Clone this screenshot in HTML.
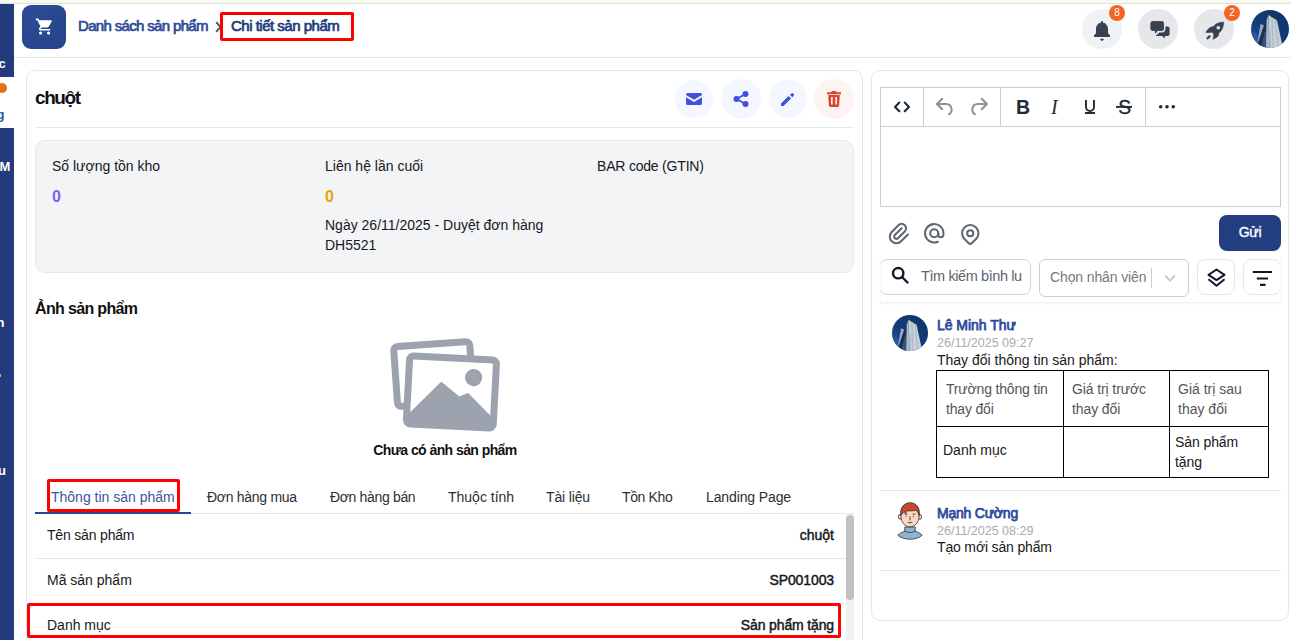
<!DOCTYPE html>
<html><head><meta charset="utf-8">
<style>
*{box-sizing:border-box;margin:0;padding:0}
html,body{width:1291px;height:640px;overflow:hidden;background:#fff;font-family:"Liberation Sans",sans-serif;color:#16181b}
.a{position:absolute}
svg{display:block}
.sb{position:absolute;left:0;width:14px;background:#233a7d;overflow:hidden}
.sbt{position:absolute;color:#fff;font-size:13px;line-height:13px;font-weight:bold}
.bc{font-size:15px;font-weight:bold;line-height:18px;white-space:nowrap}
.redbox{position:absolute;border:3px solid #ff0000;border-radius:2px}
.hic{position:absolute;width:40px;height:40px;border-radius:50%;background:#e5e7eb}
.badge{position:absolute;width:16px;height:16px;border-radius:50%;background:#f26522;color:#fff;font-size:10px;line-height:16px;text-align:center}
.card{position:absolute;border:1px solid #e5e7eb;border-radius:9px;background:#fff}
.act{position:absolute;width:38px;height:38px;border-radius:50%;background:#f4f7ff}
.t14{position:absolute;font-size:14px;line-height:17px;white-space:nowrap}
.tab{position:absolute;font-size:14px;line-height:17px;white-space:nowrap;color:#2b2f33;top:489px}
.hl{position:absolute;height:1px;background:#e5e7eb}
</style></head>
<body>
<div class="a" style="left:0;top:0;width:1291px;height:3px;background:#f6f9f0"></div>
<div class="a" style="left:0;top:3px;width:1291px;height:1px;background:#e1e5d7"></div>

<!-- sidebar -->
<div class="sb" style="top:4px;height:73px"><div class="sbt" style="left:-1.5px;top:53px">c</div></div>
<div class="a" style="left:-3px;top:83px;width:10px;height:10px;border-radius:50%;background:#e5700f"></div>
<div class="a" style="left:-3.5px;top:106.5px;font-size:13px;line-height:15px;color:#2456a0;font-weight:bold">g</div>
<div class="sb" style="top:128px;height:512px">
  <div class="sbt" style="left:-0.5px;top:32px">M</div>
  <div class="sbt" style="left:-3.5px;top:188px">n</div>
  <div class="a" style="left:-1px;top:246px;width:2px;height:3px;background:#e5a040"></div>
  <div class="sbt" style="left:-2px;top:336px">u</div>
</div>

<!-- header -->
<div class="hl" style="left:14px;top:57px;width:1277px"></div>
<div class="a" style="left:22px;top:5px;width:44px;height:44px;border-radius:9px;background:linear-gradient(135deg,#2c4d96,#26428a)">
  <svg class="a" style="left:13px;top:11.5px" width="19.2" height="19.2" viewBox="0 0 24 24"><path fill="#fff" d="M7 18c-1.1 0-1.99.9-1.99 2S5.9 22 7 22s2-.9 2-2-.9-2-2-2zM1 2v2h2l3.6 7.59-1.35 2.45c-.16.28-.25.61-.25.96 0 1.1.9 2 2 2h12v-2H7.42c-.14 0-.25-.11-.25-.25l.03-.12.9-1.63h7.45c.75 0 1.41-.41 1.75-1.03l3.58-6.49A1.003 1.003 0 0 0 20 4H5.21l-.94-2H1zm16 16c-1.1 0-1.99.9-1.99 2s.89 2 1.99 2 2-.9 2-2-.9-2-2-2z"/></svg>
</div>
<div class="a bc" style="left:78px;top:17px;color:#2c4b9a;letter-spacing:-0.66px;font-weight:normal;-webkit-text-stroke-width:.7px">Danh sách sản phẩm</div>
<svg class="a" style="left:215px;top:20.5px" width="8" height="12" viewBox="0 0 8 12"><path d="M1.2 1.2l4.3 4.8-4.3 4.8" fill="none" stroke="#4b5563" stroke-width="1.9"/></svg>
<div class="a bc" style="left:231px;top:17px;color:#213c80;letter-spacing:-0.5px;font-weight:normal;-webkit-text-stroke-width:.7px">Chi tiết sản phẩm</div>
<div class="redbox" style="left:220px;top:12px;width:134px;height:29px"></div>

<div class="hic" style="left:1082px;top:9px;background:#f0f2f5"></div>
<div class="hic" style="left:1138px;top:9px"></div>
<div class="hic" style="left:1194px;top:9px"></div>
<svg class="a" style="left:1080px;top:10px" width="150" height="40" viewBox="1080 10 150 40">
  <g fill="#374151">
    <rect x="1101.1" y="21" width="1.9" height="2.8" rx=".5"/>
    <path d="M1102 22.6c-3.5 0-6 2.9-6 6.4v4.3l-2 1.9v1.7h16v-1.7l-2-1.9v-4.3c0-3.5-2.5-6.4-6-6.4z"/>
    <path d="M1099.9 38.8h4.2l-1.3 2h-1.6z"/>
  </g>
  <path d="M1160.5 26.5h7.1a2 2 0 0 1 2 2v5.4a2 2 0 0 1-2 2h-2.7l-.1 2.7-2.7-2.7h-4.6l-2.2 .1 3.2-2.5z" fill="#374151"/>
  <path d="M1152.6 21.3h9.2a2 2 0 0 1 2 2v5.5a2 2 0 0 1-2 2h-4.2l-2.4 3-.2-3h-2.4a2 2 0 0 1-2-2v-5.5a2 2 0 0 1 2-2z" fill="#374151" stroke="#e5e7eb" stroke-width="3.2" paint-order="stroke"/>
  <path d="M1152.6 21.3h9.2a2 2 0 0 1 2 2v5.5a2 2 0 0 1-2 2h-4.2l-2.4 3-.2-3h-2.4a2 2 0 0 1-2-2v-5.5a2 2 0 0 1 2-2z" fill="#374151"/>
  <path d="M1223.7 22.2C1221 22 1218 22.7 1215.6 24.3L1213.4 26.5 1210.6 27.3C1208.9 28 1206.9 30.4 1205.9 32.4L1210.9 32.5 1211.7 32 1213.9 34.2 1213 39.2C1215 38.4 1217.6 36.8 1218.4 35.7L1218.7 33.3 1220.8 31.2C1222.4 29.4 1223.5 25.8 1223.7 22.2z" fill="#374151" stroke="#374151" stroke-width=".6" stroke-linejoin="round"/>
  <circle cx="1218.3" cy="27.7" r="1.8" fill="#e5e7eb"/>
  <path d="M1206.9 38.9l3.3-3.1" stroke="#374151" stroke-width="2.2"/>
</svg>
<svg class="a" style="left:1250px;top:9px" width="40" height="40" viewBox="0 0 40 40"><defs><clipPath id="c1"><circle cx="20" cy="20" r="19"/></clipPath><linearGradient id="skyc1" x1="1" y1="0" x2="0" y2="1"><stop offset="0" stop-color="#0c3468"/><stop offset=".6" stop-color="#143d78"/><stop offset="1" stop-color="#2a5ea0"/></linearGradient></defs><g clip-path="url(#c1)">
      <rect width="40" height="40" fill="url(#skyc1)"/>
      <path d="M2 40L4 22 9 28 7 40z" fill="#2f64a6" opacity=".6"/>
      <path d="M7.5 33L10.5 15 14.5 16.5 12 36z" fill="#8ea9c6"/>
      <path d="M7 37L14 16 16.8 11 16.5 40 9 40z" fill="#1b3050"/>
      <path d="M11 38L14.5 24 16.5 22 16 40z" fill="#3d5e86" opacity=".8"/>
      <path d="M16.5 11L18.5 6 19.3 40 16 40z" fill="#a9b9c8"/>
      <path d="M18.5 6L27 11.5 32.5 37 19.5 40z" fill="#c6cfd8"/>
      <path d="M22 9l1 30M25.5 11l2.5 27M20 20l.3 18" stroke="#9fb1c3" stroke-width=".8" fill="none"/>
      <path d="M19 7.5l8 4.5" stroke="#d9b98a" stroke-width="1" opacity=".8"/>
    </g></svg>
<div class="badge" style="left:1109px;top:5px">8</div>
<div class="badge" style="left:1224px;top:5px">2</div>



<!-- left card -->
<div class="card" style="left:26px;top:70px;width:837px;height:600px"></div>
<div class="a" style="left:35px;top:87px;font-size:19px;font-weight:bold;line-height:22px;letter-spacing:-1.4px;color:#111">chuột</div>
<div class="act" style="left:675px;top:80px">
  <svg class="a" style="left:11px;top:13px" width="16" height="12" viewBox="0 0 16 12"><path fill="#4150e0" d="M1.5 0h13A1.5 1.5 0 0 1 16 1.5v.6L8 6.8 0 2.1v-.6A1.5 1.5 0 0 1 1.5 0zM0 4.2l8 4.7 8-4.7v6.3A1.5 1.5 0 0 1 14.5 12h-13A1.5 1.5 0 0 1 0 10.5z"/></svg>
</div>
<div class="act" style="left:721px;top:79px;width:40px;height:40px">
  <svg class="a" style="left:12px;top:12px" width="16" height="16" viewBox="0 0 16 16"><g fill="#4150e0"><circle cx="3.5" cy="8" r="3"/><circle cx="12.5" cy="3" r="3"/><circle cx="12.5" cy="13" r="3"/></g><path d="M3.5 8L12.5 3M3.5 8l9 5" stroke="#4150e0" stroke-width="2"/></svg>
</div>
<div class="act" style="left:769px;top:80px">
  <svg class="a" style="left:11px;top:12.7px" width="14" height="14" viewBox="0 0 14 14"><path fill="#4150e0" d="M11.4.5a1.2 1.2 0 0 1 1.7 0l.6.6a1.2 1.2 0 0 1 0 1.7l-1.4 1.4-2.3-2.3zM8.6 2.9l2.5 2.5-7.6 7.6H1v-2.5z"/></svg>
</div>
<div class="act" style="left:814px;top:79px;width:40px;height:40px;background:#fdf4f1">
  <svg class="a" style="left:13px;top:12px" width="14" height="16" viewBox="0 0 14 16"><path fill="#dc4431" d="M5 0h4l.6 1.2H14v2H0v-2h4.4zM1.2 4h11.6l-.7 10.5A1.6 1.6 0 0 1 10.5 16h-7a1.6 1.6 0 0 1-1.6-1.5zm2.8 2v7.5h1.7V6zm4.3 0v7.5H10V6z"/></svg>
</div>
<div class="hl" style="left:35px;top:127px;width:819px"></div>

<div class="a" style="left:35px;top:140px;width:819px;height:133px;background:#f3f4f6;border:1px solid #e5e7eb;border-radius:10px"></div>
<div class="t14" style="left:52px;top:157.5px">Số lượng tồn kho</div>
<div class="a" style="left:52px;top:186.5px;font-size:16px;line-height:19px;font-weight:bold;color:#7c5cf6">0</div>
<div class="t14" style="left:325px;top:157.5px">Liên hệ lần cuối</div>
<div class="a" style="left:325px;top:186.5px;font-size:16px;line-height:19px;font-weight:bold;color:#e8a10a">0</div>
<div class="t14" style="left:325px;top:217px">Ngày 26/11/2025 - Duyệt đơn hàng</div>
<div class="t14" style="left:325px;top:236.5px">DH5521</div>
<div class="t14" style="left:597px;top:157.5px;letter-spacing:-0.2px">BAR code (GTIN)</div>

<div class="a" style="left:35px;top:299px;font-size:16px;font-weight:bold;line-height:19px;letter-spacing:-0.65px;color:#111">Ảnh sản phẩm</div>
<svg class="a" style="left:380px;top:328px" width="130" height="110" viewBox="380 328 130 110">
  <g transform="rotate(-4 433.6 373.9)"><rect x="395.5" y="344" width="76.2" height="60" rx="4" fill="none" stroke="#9ca3af" stroke-width="7"/></g>
  <g transform="rotate(3 451.4 392)">
    <rect x="407.9" y="358" width="87" height="68" rx="4" fill="#fff" stroke="#9ca3af" stroke-width="7"/>
    <circle cx="472.8" cy="376.4" r="8.6" fill="#9ca3af"/>
    <path d="M410 416.5L440.8 382.9 459.7 396.6 468.1 392.7 494 416.5 494 428 410 428z" fill="#9ca3af" stroke="#9ca3af" stroke-width="1" stroke-linejoin="round"/>
  </g>
</svg>
<div class="a" style="left:345px;top:441.5px;width:200px;text-align:center;font-size:14px;font-weight:bold;line-height:17px;letter-spacing:-0.57px;color:#111">Chưa có ảnh sản phẩm</div>

<!-- tabs -->
<div class="hl" style="left:35px;top:513px;width:819px"></div>
<div class="a" style="left:35px;top:512px;width:156px;height:2px;background:#2a4890"></div>
<div class="tab" style="left:51px;color:#3b55a0">Thông tin sản phẩm</div>
<div class="tab" style="left:207px;letter-spacing:-0.28px">Đơn hàng mua</div>
<div class="tab" style="left:330px;letter-spacing:-0.34px">Đơn hàng bán</div>
<div class="tab" style="left:448px">Thuộc tính</div>
<div class="tab" style="left:546px;letter-spacing:-0.14px">Tài liệu</div>
<div class="tab" style="left:622px;letter-spacing:-0.36px">Tồn Kho</div>
<div class="tab" style="left:706px;letter-spacing:-0.12px">Landing Page</div>
<div class="redbox" style="left:47px;top:479px;width:133px;height:33px"></div>

<div class="t14" style="left:47px;top:526.6px;letter-spacing:-0.18px">Tên sản phẩm</div>
<div class="t14" style="right:457px;top:526.6px;-webkit-text-stroke-width:.45px">chuột</div>
<div class="hl" style="left:35px;top:558px;width:811px"></div>
<div class="t14" style="left:47px;top:571.6px">Mã sản phẩm</div>
<div class="t14" style="right:457px;top:571.6px;-webkit-text-stroke-width:.45px;letter-spacing:-0.1px">SP001003</div>
<div class="hl" style="left:35px;top:603px;width:811px"></div>
<div class="t14" style="left:47px;top:616.6px">Danh mục</div>
<div class="t14" style="right:457px;top:616.6px;-webkit-text-stroke-width:.45px;letter-spacing:-0.14px">Sản phẩm tặng</div>
<div class="redbox" style="left:27px;top:603px;width:814px;height:35px"></div>
<div class="a" style="left:846px;top:514px;width:8px;height:126px;background:#f1f1f1"></div>
<div class="a" style="left:846px;top:515px;width:8px;height:85px;border-radius:4px;background:#c1c1c1"></div>

<!-- right card -->
<div class="card" style="left:871px;top:70px;width:418px;height:551px"></div>
<div class="a" style="left:880px;top:87px;width:401px;height:120px;border:1px solid #ccc"></div>
<div class="a" style="left:880px;top:126px;width:401px;height:1px;background:#ccc"></div>
<div class="a" style="left:923px;top:87px;width:1px;height:39px;background:#ccc"></div>
<div class="a" style="left:1000px;top:87px;width:1px;height:39px;background:#ccc"></div>
<div class="a" style="left:1145px;top:87px;width:1px;height:39px;background:#ccc"></div>
<svg class="a" style="left:880px;top:87px" width="300" height="40" viewBox="880 87 300 40">
  <path d="M899.3 102.6l-4.3 4.3 4.3 4.3M904.7 102.6l4.3 4.3-4.3 4.3" fill="none" stroke="#1f2937" stroke-width="2.1" stroke-linecap="round" stroke-linejoin="round"/>
  <path d="M942.2 98.8L936.9 104 942.2 109.3M937.5 104H946.3A5.6 5.6 0 0 1 949 114.3" fill="none" stroke="#8a9199" stroke-width="2" stroke-linecap="round" stroke-linejoin="round"/>
  <path d="M981.7 98.8L987 104 981.7 109.3M986.4 104H977.6A5.6 5.6 0 0 0 974.9 114.3" fill="none" stroke="#8a9199" stroke-width="2" stroke-linecap="round" stroke-linejoin="round"/>
  <text x="1016" y="114" font-family="Liberation Sans" font-weight="bold" font-size="19.5" fill="#1f2937">B</text>
  <text x="1051" y="114" font-family="Liberation Serif" font-style="italic" font-size="20" fill="#1f2937">I</text>
  <path d="M1086 100v7a4 4 0 0 0 8 0v-7M1085 113h10" fill="none" stroke="#1f2937" stroke-width="1.9"/>
  <text x="1118.3" y="114" font-family="Liberation Sans" font-size="19.3" fill="#1f2937" stroke="#1f2937" stroke-width=".35">S</text><path d="M1116 106.9h16" stroke="#1f2937" stroke-width="1.9"/>
  <circle cx="1160.7" cy="106.7" r="1.8" fill="#1f2937"/><circle cx="1167" cy="106.7" r="1.8" fill="#1f2937"/><circle cx="1173.3" cy="106.7" r="1.8" fill="#1f2937"/>
</svg>
<svg class="a" style="left:885.5px;top:221px" width="25" height="25" viewBox="0 0 24 24" fill="none" stroke="#5f6773" stroke-width="2" stroke-linecap="round" stroke-linejoin="round"><path d="M15 7l-6.5 6.5a1.5 1.5 0 0 0 3 3l6.5 -6.5a3 3 0 0 0 -6 -6l-6.5 6.5a4.5 4.5 0 0 0 9 9l6.5 -6.5"/></svg>
<svg class="a" style="left:921.8px;top:220.7px" width="24.5" height="24.5" viewBox="0 0 24 24" fill="none" stroke="#5f6773" stroke-width="2" stroke-linecap="round" stroke-linejoin="round"><path d="M12 12m-4 0a4 4 0 1 0 8 0a4 4 0 1 0 -8 0"/><path d="M16 12v1.5a2.5 2.5 0 0 0 5 0v-1.5a9 9 0 1 0 -5.5 8.28"/></svg>
<svg class="a" style="left:957.7px;top:222.4px" width="24.5" height="24.5" viewBox="0 0 24 24" fill="none" stroke="#5f6773" stroke-width="2" stroke-linecap="round" stroke-linejoin="round"><path d="M9 11a3 3 0 1 0 6 0a3 3 0 0 0 -6 0"/><path d="M17.657 16.657l-4.243 4.243a2 2 0 0 1 -2.827 0l-4.244 -4.243a8 8 0 1 1 11.314 0z"/></svg>
<div class="a" style="left:1219px;top:215px;width:62px;height:36px;border-radius:8px;background:#233e80;color:#fff;font-size:14px;text-align:center;line-height:34px;letter-spacing:-0.3px;-webkit-text-stroke:0.35px #fff">Gửi</div>

<div class="a" style="left:880px;top:259px;width:151px;height:36px;border:1px solid #d1d5db;border-radius:7px"></div>
<svg class="a" style="left:891px;top:266px" width="18" height="18" viewBox="0 0 18 18"><circle cx="7.2" cy="7.2" r="5.2" fill="none" stroke="#111827" stroke-width="2.4"/><path d="M11 11l5.5 5.5" stroke="#111827" stroke-width="2.4" stroke-linecap="round"/></svg>
<div class="a" style="left:921px;top:267.5px;width:101px;overflow:hidden;font-size:14.5px;line-height:17px;color:#5b6470;white-space:nowrap;letter-spacing:-0.4px">Tìm kiếm bình luận</div>
<div class="a" style="left:1039px;top:259px;width:150px;height:38px;border:1px solid #cccccc;border-radius:6px"></div>
<div class="a" style="left:1050px;top:268.6px;font-size:14px;line-height:17px;color:#7a7a7a;white-space:nowrap;letter-spacing:-0.12px">Chọn nhân viên</div>
<div class="a" style="left:1151px;top:268px;width:1px;height:20px;background:#cccccc"></div>
<svg class="a" style="left:1163px;top:273px" width="14" height="10" viewBox="0 0 14 10"><path d="M2 2.5l5 5 5-5" fill="none" stroke="#cccccc" stroke-width="2"/></svg>
<div class="a" style="left:1197px;top:259px;width:38px;height:36px;border:1px solid #e5e7eb;border-radius:8px">
  <svg class="a" style="left:8px;top:8px" width="21" height="20" viewBox="0 0 21 20"><path d="M10.5 1.5l8 5.3-8 5.3-8-5.3z" fill="none" stroke="#111827" stroke-width="2" stroke-linejoin="round"/><path d="M2.5 11.2l8 6.6 8-6.6" fill="none" stroke="#111827" stroke-width="2" stroke-linejoin="round"/></svg>
</div>
<div class="a" style="left:1243px;top:259px;width:38px;height:36px;border:1px solid #e5e7eb;border-radius:8px">
  <svg class="a" style="left:8px;top:10px" width="21" height="16" viewBox="0 0 21 16"><path d="M.8 2h19.2M4.8 8.5H16M8 14.8h5.5" stroke="#111827" stroke-width="2.2"/></svg>
</div>
<div class="a" style="left:880px;top:255px;width:401px;height:48px;border:1px solid #f7f8f9;border-top:none;border-bottom:1px solid #f0f1f3;box-shadow:0 1px 2px rgba(0,0,0,.035)"></div>

<!-- comments -->
<svg class="a" style="left:891px;top:314px" width="38" height="38" viewBox="0 0 40 40"><defs><clipPath id="c2"><circle cx="20" cy="20" r="19"/></clipPath><linearGradient id="skyc2" x1="1" y1="0" x2="0" y2="1"><stop offset="0" stop-color="#0c3468"/><stop offset=".6" stop-color="#143d78"/><stop offset="1" stop-color="#2a5ea0"/></linearGradient></defs><g clip-path="url(#c2)">
      <rect width="40" height="40" fill="url(#skyc2)"/>
      <path d="M2 40L4 22 9 28 7 40z" fill="#2f64a6" opacity=".6"/>
      <path d="M7.5 33L10.5 15 14.5 16.5 12 36z" fill="#8ea9c6"/>
      <path d="M7 37L14 16 16.8 11 16.5 40 9 40z" fill="#1b3050"/>
      <path d="M11 38L14.5 24 16.5 22 16 40z" fill="#3d5e86" opacity=".8"/>
      <path d="M16.5 11L18.5 6 19.3 40 16 40z" fill="#a9b9c8"/>
      <path d="M18.5 6L27 11.5 32.5 37 19.5 40z" fill="#c6cfd8"/>
      <path d="M22 9l1 30M25.5 11l2.5 27M20 20l.3 18" stroke="#9fb1c3" stroke-width=".8" fill="none"/>
      <path d="M19 7.5l8 4.5" stroke="#d9b98a" stroke-width="1" opacity=".8"/>
    </g></svg>
<div class="a" style="left:937px;top:316.5px;font-size:14px;line-height:17px;color:#2e4a9e;-webkit-text-stroke-width:.75px;letter-spacing:-0.03px;white-space:nowrap">Lê Minh Thư</div>
<div class="a" style="left:937px;top:335.6px;font-size:12.5px;line-height:14px;color:#a7abb3;white-space:nowrap">26/11/2025 09:27</div>
<div class="t14" style="left:937px;top:351.5px;color:#16181b">Thay đổi thông tin sản phẩm:</div>
<div class="a" style="left:936px;top:370px;width:333px;height:108px;border:1px solid #000"></div>
<div class="a" style="left:936px;top:426px;width:333px;height:1px;background:#000"></div>
<div class="a" style="left:1063px;top:370px;width:1px;height:108px;background:#000"></div>
<div class="a" style="left:1169px;top:370px;width:1px;height:108px;background:#000"></div>
<div class="t14" style="left:946px;top:380.3px;color:#555;line-height:19.8px;letter-spacing:-0.17px">Trường thông tin<br>thay đổi</div>
<div class="t14" style="left:1072px;top:380.3px;color:#555;line-height:19.8px;letter-spacing:-0.11px">Giá trị trước<br>thay đổi</div>
<div class="t14" style="left:1178px;top:380.3px;color:#555;line-height:19.8px">Giá trị sau<br>thay đổi</div>
<div class="t14" style="left:943px;top:442.2px;color:#16181b">Danh mục</div>
<div class="t14" style="left:1175px;top:431.7px;color:#16181b;line-height:20.6px;letter-spacing:-0.09px">Sản phẩm<br>tặng</div>
<div class="hl" style="left:880px;top:490px;width:401px"></div>
<svg class="a" style="left:896px;top:501px" width="28" height="40" viewBox="0 0 28 40">
  <path d="M1.8 34.2c3.2-3 7-4.6 12.2-4.6s9 1.6 12.2 4.6c-3 2.7-7.4 4-12.2 4s-9.2-1.3-12.2-4z" fill="#8fb3d0" stroke="#2d3440" stroke-width=".8"/>
  <path d="M8.8 26v4c1.3 1 3 1.5 5.2 1.5s3.9-.5 5.2-1.5v-4z" fill="#8fb3d0" stroke="#2d3440" stroke-width=".8"/>
  <ellipse cx="4.2" cy="15.8" rx="1.8" ry="2.4" fill="#fdd5c0" stroke="#2d3440" stroke-width=".8"/>
  <ellipse cx="23.8" cy="15.8" rx="1.8" ry="2.4" fill="#fdd5c0" stroke="#2d3440" stroke-width=".8"/>
  <path d="M5 11c0-5.5 4-8.5 9-8.5s9 3 9 8.5v4.5c0 6-4 10.3-9 10.3s-9-4.3-9-10.3z" fill="#fdd5c0" stroke="#2d3440" stroke-width=".8"/>
  <path d="M4.8 14.5c-.8-7.5 3.2-12.8 9.2-12.8 6.2 0 10 4.8 9.2 12.8-1-2.5-1.8-4.2-3.3-5.2-2.8.6-5.8.8-8.6.4-.8 1.4-1.5 2.5-2.2 2.9-.4-.9-.6-1.6-.7-2.2-1.3 1.1-2.2 2.6-3.6 4.1z" fill="#c8472f" stroke="#2d3440" stroke-width=".8"/>
  <path d="M8.8 13.2h2.6M16.6 13.2h2.6" stroke="#2d3440" stroke-width=".9"/>
  <path d="M9.8 15.4h1M17 15.4h1M14 15.5v3.8M11.8 21.2c1.5.8 3 .8 4.4 0" stroke="#2d3440" stroke-width=".9" fill="none"/>
</svg>
<div class="a" style="left:937px;top:504.5px;font-size:14px;line-height:17px;color:#2e4a9e;-webkit-text-stroke-width:.75px;letter-spacing:-0.22px;white-space:nowrap">Mạnh Cường</div>
<div class="a" style="left:937px;top:523.5px;font-size:12.5px;line-height:14px;color:#a7abb3;white-space:nowrap">26/11/2025 08:29</div>
<div class="t14" style="left:937px;top:539.2px;color:#16181b;letter-spacing:-0.16px">Tạo mới sản phẩm</div>
<div class="hl" style="left:880px;top:570px;width:401px"></div>
</body></html>
